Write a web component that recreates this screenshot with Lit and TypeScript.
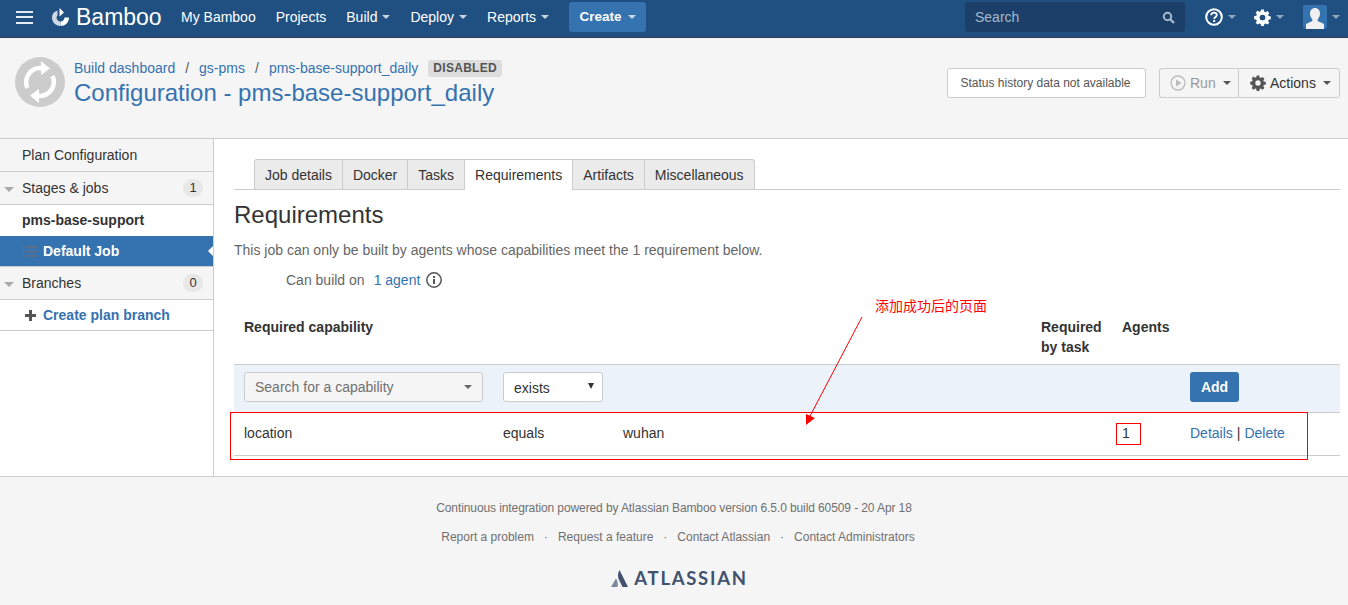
import { LitElement, css, html, svg } from "lit";
import { customElement } from "lit/decorators.js";

// gear outline shared by the header and the Actions button
const gear = (size: number, color: string) => html`<svg width=${size} height=${size} viewBox="0 0 16 16">
  <path fill=${color} fill-rule="evenodd" d="M6.700.5h2.600l.4 2 1.200.5 1.700-1.100 1.800 1.800-1.100 1.700.5 1.200 2 .4v2.600l-2 .4-.5 1.200 1.100 1.700-1.800 1.800-1.700-1.100-1.200.5-.4 2H6.700l-.4-2-1.200-.5-1.700 1.100-1.800-1.800 1.100-1.700-.5-1.200-2-.4V6.700l2-.4.5-1.200-1.100-1.700 1.800-1.800 1.700 1.100 1.200-.5zM8 5.300a2.700 2.700 0 1 0 0 5.400 2.700 2.700 0 0 0 0-5.400z"/>
</svg>`;

const NAV = [
  { label: "My Bamboo", caret: false },
  { label: "Projects", caret: false },
  { label: "Build", caret: true },
  { label: "Deploy", caret: true },
  { label: "Reports", caret: true },
];

const TABS = ["Job details", "Docker", "Tasks", "Requirements", "Artifacts", "Miscellaneous"];

@customElement("app-root")
export class AppRoot extends LitElement {
  static override styles = css`
    :host {
      display: block;
      position: relative;
      width: 1348px;
      height: 605px;
      overflow: hidden;
      font: 14px/20px "Liberation Sans", Arial, sans-serif;
      color: #333;
      background: #fff;
    }
    a { color: #3572b0; text-decoration: none; }

    /* top bar */
    .top {
      height: 38px;
      box-sizing: border-box;
      background: #205081;
      border-bottom: 1px solid #2e3d54;
      display: flex;
      align-items: center;
      padding: 0 0 3px 16px;
      color: #fff;
    }
    .burger { width: 17px; height: 13px; margin-right: 19px; display: flex; flex-direction: column; justify-content: space-between; }
    .burger i { display: block; height: 2px; background: #e4ebf2; }
    .logo { display: flex; align-items: center; gap: 7px; width: 129px; }
    .logo span { font-size: 23px; font-weight: 400; line-height: 30px; }
    .nav { display: flex; align-items: center; }
    .nav-item { display: flex; align-items: center; gap: 5px; margin-right: 20px; color: #fff; white-space: nowrap; }
    .caret { width: 0; height: 0; border: 4px solid transparent; border-top-color: currentColor; border-bottom: 0; opacity: 0.75; }
    .create {
      width: 77px;
      height: 30px;
      box-sizing: border-box;
      background: #3572b0;
      border-radius: 3px;
      display: flex;
      align-items: center;
      justify-content: center;
      gap: 6px;
      font-weight: 700;
      font-size: 13.5px;
    }
    .spacer { flex: 1; }
    .search {
      width: 220px;
      height: 30px;
      box-sizing: border-box;
      margin-right: 20px;
      padding: 0 10px;
      background: #1b3f68;
      border-radius: 3px;
      display: flex;
      align-items: center;
      justify-content: space-between;
      color: #a6b9cd;
    }
    .tool { display: flex; align-items: center; gap: 5px; color: #b5c6d8; }
    .help { margin-right: 18px; }
    .cog { margin-right: 19px; }
    .avatar { margin-right: 8px; }

    /* page header */
    .head {
      height: 101px;
      box-sizing: border-box;
      background: #f5f5f5;
      border-bottom: 1px solid #ccc;
      display: flex;
      padding: 19px 8px 0 15px;
    }
    .status { width: 50px; height: 50px; border-radius: 50%; background: #ccc; margin-right: 9px; flex: none; }
    .crumbs { display: flex; align-items: center; height: 20px; margin-top: 1px; color: #555; }
    .crumbs .sep { margin: 0 10px; color: #555; }
    .badge {
      margin-left: 10px;
      padding: 0 5px;
      height: 17px;
      line-height: 17px;
      border-radius: 3px;
      background: #ddd;
      color: #555;
      font-size: 12px;
      font-weight: 700;
      letter-spacing: 0.3px;
    }
    h1 { margin: 0; font-size: 24px; line-height: 30px; font-weight: 400; color: #3572b0; }
    .head-right { margin-left: auto; display: flex; align-items: flex-start; padding-top: 11px; }
    .btn {
      height: 30px;
      box-sizing: border-box;
      border: 1px solid #ccc;
      background: #f5f5f5;
      display: flex;
      align-items: center;
      border-radius: 3px;
      color: #333;
    }
    .history { width: 199px; justify-content: center; background: #fff; font-size: 12px; color: #555; margin-right: 13px; padding-right: 2px; }
    .run { width: 79px; padding-left: 10px; gap: 4px; color: #999; border-radius: 3px 0 0 3px; border-right: 0; }
    .actions { width: 102px; padding-left: 11px; gap: 4px; border-radius: 0 3px 3px 0; }
    .btn .caret { margin-left: 3px; opacity: 1; color: #555; }

    /* body */
    .main { display: flex; height: 337px; }
    .side { width: 214px; box-sizing: border-box; border-right: 1px solid #ccc; flex: none; }
    .s-row { display: flex; align-items: center; box-sizing: border-box; border-bottom: 1px solid #ccc; padding-left: 22px; position: relative; }
    .s-grey { height: 33px; background: #f5f5f5; }
    .s-plan { height: 33px; background: #f5f5f5; }
    .s-tri { position: absolute; left: 4px; top: 15px; width: 0; height: 0; border: 5px solid transparent; border-top-color: #aaa; border-bottom: 0; }
    .count { margin-left: auto; margin-right: 10px; min-width: 20px; height: 18px; line-height: 18px; text-align: center; border-radius: 10px; background: #e8e8e8; font-size: 13px; }
    .s-stage { height: 31px; font-weight: 700; border-bottom: 0; padding-bottom: 2px; }
    .s-job { height: 31px; background: #3572b0; color: #fff; font-weight: 700; padding-left: 23px; gap: 5px; border-bottom: 1px solid #ccc; }
    .s-job::after {
      content: "";
      position: absolute;
      right: 0;
      top: 10px;
      border: 5px solid transparent;
      border-right-color: #fff;
      border-left: 0;
    }
    .s-add { height: 31px; font-weight: 700; padding-left: 25px; gap: 7px; }
    .content { flex: 1; padding: 20px 8px 0 20px; min-width: 0; }
    .tabs { display: flex; padding-left: 20px; border-bottom: 1px solid #ccc; height: 31px; box-sizing: border-box; }
    .tab {
      height: 30px;
      box-sizing: border-box;
      padding: 0 10px;
      line-height: 31px;
      background: #ebebeb;
      border: 1px solid #ccc;
      border-left-width: 0;
      border-bottom: 0;
      white-space: nowrap;
    }
    .tab:first-child { border-left-width: 1px; border-radius: 3px 0 0 0; }
    .tab:last-child { border-radius: 0 3px 0 0; }
    .tab.on { background: #fff; height: 31px; }
    h2 { margin: 10px 0 0; font-size: 24px; line-height: 30px; font-weight: 400; color: #333; }
    .lead { margin: 10px 0 0; color: #666; }
    .agents { display: flex; align-items: center; margin: 10px 0 0 52px; color: #666; }
    .agents a { margin-left: 9px; margin-right: 6px; }
    .grid { display: grid; grid-template-columns: 259px 120px 418px 81px 68px 160px; margin-top: 27px; }
    .th { font-weight: 700; padding: 0 10px; height: 47px; border-bottom: 1px solid #ccc; }
    .td { padding: 0 10px; display: flex; align-items: center; box-sizing: border-box; border-bottom: 1px solid #ccc; }
    .form { background: #ebf2f9; height: 48px; padding-bottom: 4px; }
    .row { height: 43px; padding-bottom: 3px; }
    .combo {
      width: 239px;
      height: 30px;
      box-sizing: border-box;
      background: #f5f5f5;
      border: 1px solid #ccc;
      border-radius: 3px;
      display: flex;
      align-items: center;
      justify-content: space-between;
      padding: 0 10px;
      color: #707070;
    }
    .combo .caret { color: #666; opacity: 1; }
    .select {
      width: 100px;
      height: 30px;
      box-sizing: border-box;
      background: #fff;
      border: 1px solid #ccc;
      border-radius: 3px;
      display: flex;
      align-items: center;
      justify-content: space-between;
      padding: 2px 8px 0 10px;
    }
    .select i { border: 3.500px solid transparent; border-top: 6px solid #333; border-bottom: 0; margin-bottom: 3px; }
    .add {
      width: 49px;
      height: 30px;
      background: #3572b0;
      color: #fff;
      font-weight: 700;
      border-radius: 3px;
      display: flex;
      align-items: center;
      justify-content: center;
    }
    .pipe { color: #333; margin: 0 4px; }

    /* footer */
    .foot {
      height: 129px;
      box-sizing: border-box;
      background: #f5f5f5;
      border-top: 1px solid #ccc;
      padding-top: 21px;
      display: flex;
      flex-direction: column;
      align-items: center;
      font-size: 12px;
      color: #707070;
    }
    .foot-line { letter-spacing: -0.1px; }
    .foot-links { display: flex; margin-top: 9px; padding-left: 8px; }
    .foot-links i { font-style: normal; margin: 0 10px; }
    .atl { display: flex; align-items: center; gap: 6px; margin: 21px 0 0 11px; color: #42526e; font: 700 18.5px/20px Lato, "Open Sans", sans-serif; letter-spacing: 1.7px; }

    /* red review marks drawn over the screenshot */
    .mark { position: absolute; border: 1px solid #f00; box-sizing: border-box; pointer-events: none; }
    .mark-row { left: 230px; top: 412px; width: 1078px; height: 48px; }
    .mark-num { left: 1116px; top: 423px; width: 25px; height: 22px; }
    .note {
      position: absolute;
      left: 875px;
      top: 295px;
      color: #f00;
      font: 14px/20px "Noto Sans CJK SC", "Liberation Sans", sans-serif;
    }
    .arrow { position: absolute; left: 0; top: 0; pointer-events: none; }
  `;

  override render() {
    return html`
      <div class="top">
        <div class="burger"><i></i><i></i><i></i></div>
        <div class="logo">
          <svg width="17" height="18" viewBox="0 0 17 18">
            <path fill="#fff" d="M7.500 0 12 4.500 7.500 8.500z"/>
            <path fill="#fff" d="M12.500 9.500H17C17 14.500 13 18 8.500 18v-4.500c2.300 0 4-1.800 4-4z"/>
            <path fill="#cfd8e2" d="M8.500 18C3.500 18 0 14.300 0 9.500 0 6 2.200 3.500 5.500 2.500v5C4.800 8 4.500 8.800 4.500 9.500c0 2.300 1.700 4 4 4z"/>
          </svg>
          <span>Bamboo</span>
        </div>
        <div class="nav">
          ${NAV.map((n) => html`<div class="nav-item">${n.label}${n.caret ? html`<i class="caret"></i>` : ""}</div>`)}
        </div>
        <div class="create">Create <i class="caret"></i></div>
        <div class="spacer"></div>
        <div class="search">
          <span>Search</span>
          <svg width="13" height="13" viewBox="0 0 13 13"><circle cx="5.500" cy="5.500" r="3.700" fill="none" stroke="#a6b9cd" stroke-width="2"/><path d="M8.500 8.500 12 12" stroke="#a6b9cd" stroke-width="2.400"/></svg>
        </div>
        <div class="tool help">
          <svg width="18" height="18" viewBox="0 0 18 18">
            <circle cx="9" cy="9" r="7.800" fill="none" stroke="#fff" stroke-width="2"/>
            <path d="M6.200 7.200C6.200 5.500 7.500 4.600 9 4.600s2.800.9 2.800 2.400c0 2-2.600 2-2.600 4" fill="none" stroke="#fff" stroke-width="1.800"/>
            <rect x="8.200" y="12" width="2" height="2" fill="#fff"/>
          </svg>
          <i class="caret"></i>
        </div>
        <div class="tool cog">${gear(17, "#fff")}<i class="caret"></i></div>
        <div class="tool avatar">
          <svg width="24" height="24" viewBox="0 0 24 24">
            <rect width="24" height="24" rx="2" fill="#3572b0"/>
            <path fill="#f0f0f0" d="M12 3c3 0 5 2.300 5 5.500 0 2.500-1 4.500-2.300 5.700v1.800L21 19v5H3v-5l6.300-3v-1.800C8 13 7 11 7 8.500 7 5.300 9 3 12 3z"/>
          </svg>
          <i class="caret"></i>
        </div>
      </div>

      <div class="head">
        <svg class="status" viewBox="0 0 50 50">
          <g fill="none" stroke="#fff" stroke-width="4.500">
            <path d="M12.500 31A14 14 0 0 1 27 11.200"/>
            <path d="M37.500 19A14 14 0 0 1 23 38.800"/>
          </g>
          <path fill="#fff" d="M26 4l9 7.500-9 6.500zM24 46l-9-7.500 9-6.500z"/>
        </svg>
        <div>
          <div class="crumbs">
            <a>Build dashboard</a><span class="sep">/</span><a>gs-pms</a><span class="sep">/</span><a>pms-base-support_daily</a>
            <span class="badge">DISABLED</span>
          </div>
          <h1>Configuration - pms-base-support_daily</h1>
        </div>
        <div class="head-right">
          <div class="btn history">Status history data not available</div>
          <div class="btn run">
            <svg width="16" height="16" viewBox="0 0 16 16"><circle cx="8" cy="8" r="7" fill="none" stroke="#bbb" stroke-width="1.300"/><path fill="#bbb" d="M6 4.500 11.500 8 6 11.500z"/></svg>
            Run <i class="caret"></i>
          </div>
          <div class="btn actions">${gear(16, "#555")}Actions <i class="caret"></i></div>
        </div>
      </div>

      <div class="main">
        <div class="side">
          <div class="s-row s-plan">Plan Configuration</div>
          <div class="s-row s-grey"><i class="s-tri"></i>Stages &amp; jobs<span class="count">1</span></div>
          <div class="s-row s-stage">pms-base-support</div>
          <div class="s-row s-job">
            <svg width="15" height="11" viewBox="0 0 15 11"><path fill="#5a6f88" d="M0 0h2v2H0zM4 0h11v2H4zM0 4.500h2v2H0zM4 4.500h11v2H4zM0 9h2v2H0zM4 9h11v2H4z"/></svg>
            Default Job
          </div>
          <div class="s-row s-grey"><i class="s-tri"></i>Branches<span class="count">0</span></div>
          <div class="s-row s-add">
            <svg width="11" height="11" viewBox="0 0 11 11"><path fill="#555" d="M4 0h3v4h4v3H7v4H4V7H0V4h4z"/></svg>
            <a>Create plan branch</a>
          </div>
        </div>
        <div class="content">
          <div class="tabs">
            ${TABS.map((t) => html`<div class="tab ${t === "Requirements" ? "on" : ""}">${t}</div>`)}
          </div>
          <h2>Requirements</h2>
          <p class="lead">This job can only be built by agents whose capabilities meet the 1 requirement below.</p>
          <div class="agents">
            Can build on <a>1 agent</a>
            <svg width="16" height="16" viewBox="0 0 16 16"><circle cx="8" cy="8" r="7.200" fill="none" stroke="#555" stroke-width="1.500"/><path fill="#555" d="M7 7h2v5H7zM7 4h2v2H7z"/></svg>
          </div>
          <div class="grid">
            <div class="th">Required capability</div>
            <div class="th"></div>
            <div class="th"></div>
            <div class="th">Required by task</div>
            <div class="th">Agents</div>
            <div class="th"></div>

            <div class="td form"><div class="combo">Search for a capability <i class="caret"></i></div></div>
            <div class="td form" style="grid-column: span 2"><div class="select">exists <i></i></div></div>
            <div class="td form"></div>
            <div class="td form"></div>
            <div class="td form"><div class="add">Add</div></div>

            <div class="td row">location</div>
            <div class="td row">equals</div>
            <div class="td row">wuhan</div>
            <div class="td row"></div>
            <div class="td row">1</div>
            <div class="td row"><a>Details</a><span class="pipe">|</span><a>Delete</a></div>
          </div>
        </div>
      </div>

      <div class="foot">
        <div class="foot-line">Continuous integration powered by Atlassian Bamboo version 6.5.0 build 60509 - 20 Apr 18</div>
        <div class="foot-links">
          <span>Report a problem</span><i>·</i><span>Request a feature</span><i>·</i><span>Contact Atlassian</span><i>·</i><span>Contact Administrators</span>
        </div>
        <div class="atl">
          <svg width="17" height="17" viewBox="0 0 17 17">
            <path fill="#7a869a" d="M5 8.500 0 17h6.500c.6-3 .2-6-1.500-8.500z"/>
            <path fill="#42526e" d="M8.500 0C6.500 3.500 6.500 7 8.300 10.500L11.500 17H17z"/>
          </svg>
          ATLASSIAN
        </div>
      </div>

      <div class="mark mark-row"></div>
      <div class="mark mark-num"></div>
      <div class="note">添加成功后的页面</div>
      <svg class="arrow" width="1348" height="605">
        ${svg`<path d="M862 317 809 418" stroke="#f00" fill="none"/><path d="M806 425 806 414 815 418z" fill="#f00"/>`}
      </svg>
    `;
  }
}
